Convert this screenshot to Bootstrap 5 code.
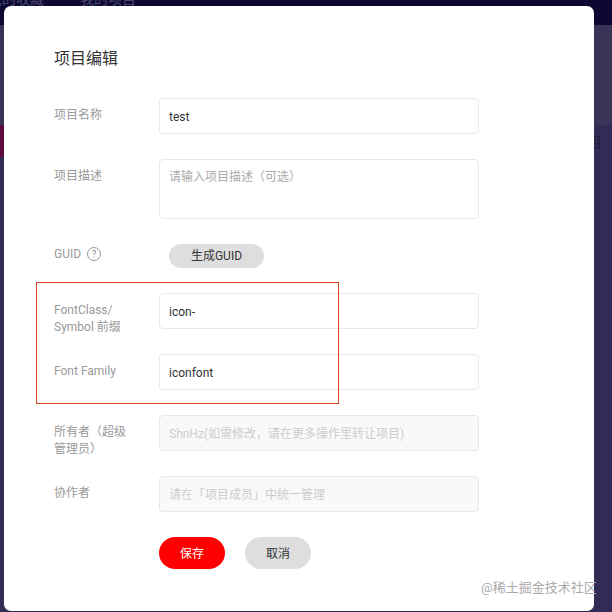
<!DOCTYPE html>
<html lang="zh-CN">
<head>
    <meta charset="UTF-8">
    <meta name="viewport" content="width=device-width, initial-scale=1.0">
    <title>项目编辑</title>
    <link href="https://cdn.jsdelivr.net/npm/bootstrap@5.3.0/dist/css/bootstrap.min.css" rel="stylesheet">
    <style>
        html, body { height: 100%; overflow: hidden; }
        body { background: #322b55; font-family: Roboto, "Noto Sans CJK SC", sans-serif; font-size: 12px; position: relative; }
        .page-top { height: 25px; background: #0c0833; color: #4a4670; font-size: 14px; line-height: 14px; overflow: hidden; gap: 36px; margin-left: -12px; }
        .page-top span { margin-top: -8px; }
        .page-band { height: 100px; background: #3a3358; }
        .page-pink { position: absolute; left: 0; top: 125px; width: 4px; height: 32px; background: #5c0b3e; }
        .page-peek { position: absolute; left: 588px; top: 133px; color: #211b42; font-size: 14px; line-height: 18px; }
        .edit-modal { position: absolute; left: 4px; top: 6px; width: 590px; height: 605px; background: #fff; border-radius: 7px; padding: 41px 0 0 50px; }
        .edit-title { font-size: 16px; line-height: 22px; padding-top: 1px; font-weight: 400; color: #333; margin: 0 0 28px; }
        .edit-row { display: flex; margin-bottom: 25px; }
        .edit-label { width: 105px; height: 36px; flex: none; padding-top: 9px; color: #999; line-height: 17px; }
        .edit-row .form-control { width: 320px; height: 36px; flex: none; font-size: 12px; line-height: 18px; padding: 9px 9px 7px; color: #333; border: 1px solid #e8e8e8; border-radius: 4px; box-shadow: none; background: #fff; font-family: inherit; }
        .edit-row textarea.form-control { height: 60px; resize: none; padding-top: 8px; }
        .edit-row .form-control::placeholder { color: #aaa; }
        .edit-row .form-control:disabled { background: #f9f9f9; }
        .edit-row .form-control:disabled::placeholder { color: #cdcdcd; }
        .guid-row { height: 24px; }
        .guid-row .edit-label { height: 24px; padding-top: 2px; }
        .help-mark { display: inline-block; width: 14px; height: 14px; margin-left: 6px; border: 1px solid #999; border-radius: 50%; font-size: 9px; line-height: 12px; text-align: center; color: #888; vertical-align: 1px; }
        .guid-btn { margin-left: 10px; width: 95px; height: 24px; padding: 1px 0 0; font-size: 12px; line-height: 23px; border: 0; border-radius: 12px; background: #dedede; color: #333; }
        .act-btn { width: 66px; height: 32px; padding: 1px 0 0; font-size: 12px; border: 0; border-radius: 16px; }
        .act-save { background: #f00; color: #fff; }
        .act-cancel { background: #dedede; color: #333; }
        .act-row { padding-left: 105px; gap: 20px; }
        .mark-box { position: absolute; left: 36px; top: 282px; width: 303px; height: 122px; border: 1px solid #d4471f; pointer-events: none; }
        .water-mark { position: absolute; left: 481px; top: 579px; font-size: 13px; line-height: 18px; color: #aaa; white-space: nowrap; }
    </style>
</head>
<body>
<div class="page-top d-flex">
    <span>我的收藏</span>
    <span>我的项目</span>
</div>
<div class="page-band"></div>
<div class="page-pink"></div>
<div class="page-peek">目</div>

<div class="edit-modal">
    <h5 class="edit-title">项目编辑</h5>
    <form>
        <div class="edit-row">
            <label class="edit-label">项目名称</label>
            <input class="form-control" type="text" value="test">
        </div>
        <div class="edit-row">
            <label class="edit-label">项目描述</label>
            <textarea class="form-control" placeholder="请输入项目描述（可选）"></textarea>
        </div>
        <div class="edit-row guid-row">
            <label class="edit-label">GUID<span class="help-mark">?</span></label>
            <button type="button" class="btn guid-btn">生成GUID</button>
        </div>
        <div class="edit-row">
            <label class="edit-label">FontClass/<br>Symbol 前缀</label>
            <input class="form-control" type="text" value="icon-">
        </div>
        <div class="edit-row">
            <label class="edit-label">Font Family</label>
            <input class="form-control" type="text" value="iconfont">
        </div>
        <div class="edit-row">
            <label class="edit-label">所有者（超级<br>管理员）</label>
            <input class="form-control" type="text" disabled placeholder="ShnHz(如需修改，请在更多操作里转让项目)">
        </div>
        <div class="edit-row">
            <label class="edit-label">协作者</label>
            <input class="form-control" type="text" disabled placeholder="请在「项目成员」中统一管理">
        </div>
        <div class="d-flex act-row">
            <button type="button" class="btn act-btn act-save">保存</button>
            <button type="button" class="btn act-btn act-cancel">取消</button>
        </div>
    </form>
</div>

<div class="mark-box"></div>
<div class="water-mark">@稀土掘金技术社区</div>
<script src="https://cdn.jsdelivr.net/npm/bootstrap@5.3.0/dist/js/bootstrap.bundle.min.js"></script>
</body>
</html>
